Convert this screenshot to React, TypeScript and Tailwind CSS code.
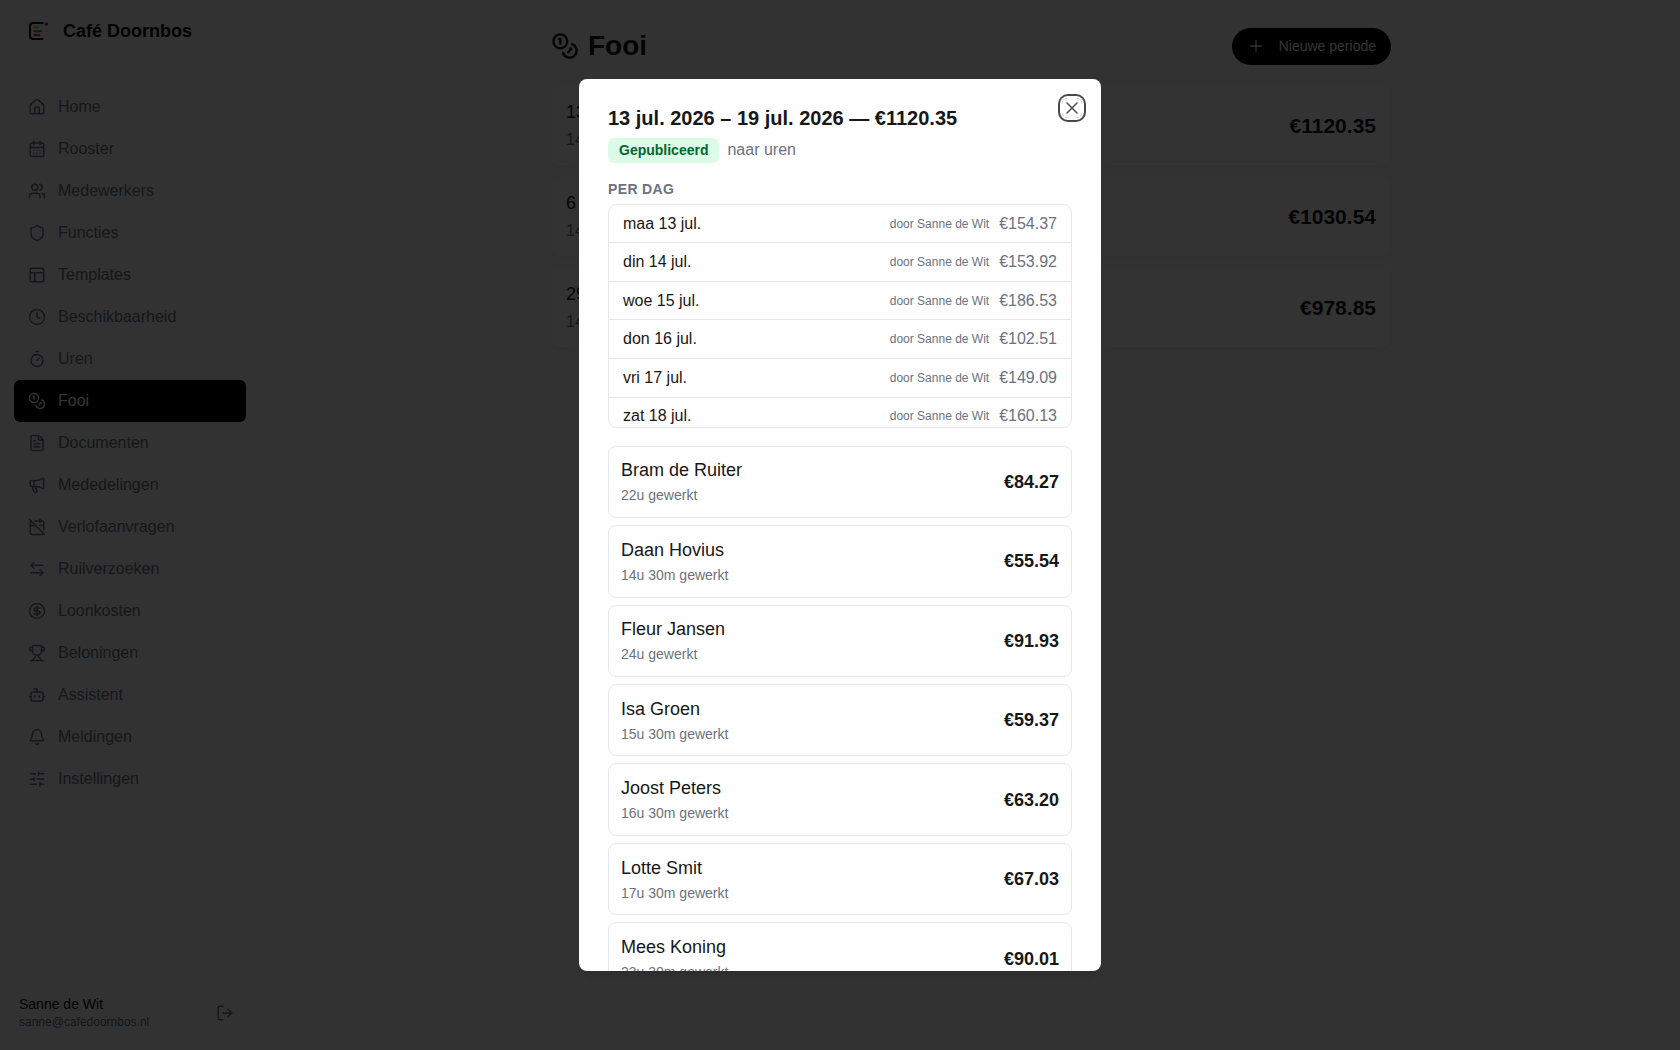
import React from "react";
import {
  House, CalendarDays, Users, Shield, PanelsTopLeft, Clock, Timer, Coins, FileText, Megaphone,
  CalendarOff, ArrowLeftRight, CircleDollarSign, Trophy, Bot, Bell, SlidersHorizontal, LogOut, Plus, X,
} from "lucide-react";

const nav = [
  { label: "Home", icon: House },
  { label: "Rooster", icon: CalendarDays },
  { label: "Medewerkers", icon: Users },
  { label: "Functies", icon: Shield },
  { label: "Templates", icon: PanelsTopLeft },
  { label: "Beschikbaarheid", icon: Clock },
  { label: "Uren", icon: Timer },
  { label: "Fooi", icon: Coins, active: true },
  { label: "Documenten", icon: FileText },
  { label: "Mededelingen", icon: Megaphone },
  { label: "Verlofaanvragen", icon: CalendarOff },
  { label: "Ruilverzoeken", icon: ArrowLeftRight },
  { label: "Loonkosten", icon: CircleDollarSign },
  { label: "Beloningen", icon: Trophy },
  { label: "Assistent", icon: Bot },
  { label: "Meldingen", icon: Bell },
  { label: "Instellingen", icon: SlidersHorizontal },
];

const periods = [
  { range: "13 jul. 2026 – 19 jul. 2026", staff: "14 medewerkers", total: "€1120.35" },
  { range: "6 jul. 2026 – 12 jul. 2026", staff: "14 medewerkers", total: "€1030.54" },
  { range: "29 jun. 2026 – 5 jul. 2026", staff: "14 medewerkers", total: "€978.85" },
];

const days = [
  ["maa 13 jul.", "€154.37"],
  ["din 14 jul.", "€153.92"],
  ["woe 15 jul.", "€186.53"],
  ["don 16 jul.", "€102.51"],
  ["vri 17 jul.", "€149.09"],
  ["zat 18 jul.", "€160.13"],
  ["zon 19 jul.", "€213.80"],
];

const people = [
  ["Bram de Ruiter", "22u gewerkt", "€84.27"],
  ["Daan Hovius", "14u 30m gewerkt", "€55.54"],
  ["Fleur Jansen", "24u gewerkt", "€91.93"],
  ["Isa Groen", "15u 30m gewerkt", "€59.37"],
  ["Joost Peters", "16u 30m gewerkt", "€63.20"],
  ["Lotte Smit", "17u 30m gewerkt", "€67.03"],
  ["Mees Koning", "23u 30m gewerkt", "€90.01"],
];

function Logo() {
  return (
    <svg viewBox="0 0 22 22" className="size-[22px]" fill="none" strokeLinecap="round" aria-hidden="true">
      <path d="M14.500 3H5A3 3 0 0 0 2 6V16A3 3 0 0 0 5 19H14.500" stroke="#0a0a0a" strokeWidth="2" />
      <path d="M6.500 7.500H10" stroke="#eab308" strokeWidth="2" />
      <path d="M6.500 11.200H13" stroke="#16a34a" strokeWidth="2" />
      <path d="M6.500 15H11.500" stroke="#dc2626" strokeWidth="2" />
      <circle cx="18.500" cy="4" r="1.800" fill="#dc2626" />
    </svg>
  );
}

function Sidebar() {
  return (
    <aside className="flex w-[262px] shrink-0 flex-col bg-neutral-50">
      <div className="flex items-center gap-3 px-7 pt-[19px]">
        <Logo />
        <span className="pl-[1px] text-lg leading-6 font-bold text-neutral-950">Café Doornbos</span>
      </div>
      <nav className="mt-[43px] flex flex-1 flex-col px-3.5">
        {nav.map(({ label, icon: Icon, active }) => (
          <a
            key={label}
            href="#"
            aria-current={active ? "page" : undefined}
            className={
              active
                ? "mr-0.5 flex h-[42px] items-center gap-3 rounded-md bg-black px-3.5 text-base text-white"
                : "mr-0.5 flex h-[42px] items-center gap-3 rounded-md px-3.5 text-base text-gray-500"
            }
          >
            <Icon size={18} strokeWidth={2} />
            {label}
          </a>
        ))}
      </nav>
      <div className="flex items-center justify-between pr-[28px] pb-[19px] pl-[19px]">
        <div>
          <p className="text-sm leading-[18px] text-neutral-950">Sanne de Wit</p>
          <p className="text-xs leading-[18px] text-gray-500">sanne@cafedoornbos.nl</p>
        </div>
        <button type="button" aria-label="Uitloggen" className="text-gray-500">
          <LogOut size={18} strokeWidth={2} />
        </button>
      </div>
    </aside>
  );
}

function PeriodsPage() {
  return (
    <main className="flex-1 px-7 pt-7">
      <div className="mx-auto max-w-[840px]">
        <header className="flex h-9 items-center justify-between">
          <h1 className="flex items-center gap-[9px] text-[28px] leading-9 font-bold text-neutral-900">
            <Coins size={28} />
            Fooi
          </h1>
          <button
            type="button"
            className="flex h-[37px] items-center gap-3.5 rounded-full bg-black px-[15px] text-sm text-white"
          >
            <Plus size={18} strokeWidth={1.75} />
            Nieuwe periode
          </button>
        </header>
        <ul className="mt-[21px] flex flex-col gap-2.5">
          {periods.map((p) => (
            <li
              key={p.range}
              className="flex items-center justify-between rounded-lg border border-neutral-50 bg-white p-3.5 shadow-xs"
            >
              <div>
                <p className="text-lg leading-6 text-neutral-900">{p.range}</p>
                <p className="mt-[5px] text-base leading-[22px] text-gray-500">{p.staff}</p>
              </div>
              <span className="text-[21px] leading-7 font-bold text-neutral-900">{p.total}</span>
            </li>
          ))}
        </ul>
      </div>
    </main>
  );
}

function PeriodDialog() {
  return (
    <div className="fixed inset-0 flex items-center justify-center bg-black/80">
      <div
        role="dialog"
        aria-modal="true"
        aria-labelledby="period-title"
        className="relative max-h-[85vh] w-full max-w-[522px] overflow-y-auto rounded-lg bg-white px-[29px] pt-[27px] pb-7 shadow-lg [scrollbar-width:none]"
      >
        <h2 id="period-title" className="text-xl leading-6 font-bold text-neutral-900">
          13 jul. 2026 – 19 jul. 2026 — €1120.35
        </h2>
        <div className="mt-2 flex items-center gap-2 text-base text-gray-500">
          <span className="rounded-md bg-green-100 px-[11px] text-sm leading-[25px] font-bold text-green-800">
            Gepubliceerd
          </span>
          naar uren
        </div>
        <h3 className="mt-4 text-sm leading-5 font-bold tracking-wide text-gray-500">PER DAG</h3>
        <div className="mt-[5px] h-[224px] overflow-y-auto rounded-lg border border-gray-200 [scrollbar-width:none]">
          <ul className="grid h-[270px] auto-rows-fr divide-y divide-gray-200">
            {days.map(([day, amount]) => (
              <li key={day} className="flex items-center justify-between px-3.5 text-base text-neutral-900">
                {day}
                <span className="flex items-center gap-2.5 text-gray-500">
                  <span className="text-xs">door Sanne de Wit</span>
                  {amount}
                </span>
              </li>
            ))}
          </ul>
        </div>
        <ul className="mt-[18px] grid h-[549px] auto-rows-fr gap-[7px]">
          {people.map(([name, hours, amount]) => (
            <li key={name} className="flex items-center justify-between rounded-lg border border-gray-200 px-3">
              <div>
                <p className="text-lg leading-6 text-neutral-900">{name}</p>
                <p className="mt-[3px] text-sm leading-5 text-gray-500">{hours}</p>
              </div>
              <span className="text-lg leading-6 font-bold text-neutral-900">{amount}</span>
            </li>
          ))}
        </ul>
        <button
          type="button"
          aria-label="Sluiten"
          className="absolute top-[19px] right-[19px] rounded-md text-neutral-900 opacity-75 ring-2 ring-neutral-950 ring-offset-2"
        >
          <X size={20} strokeWidth={1.75} />
        </button>
      </div>
    </div>
  );
}

export default function App() {
  return (
    <div className="flex h-screen overflow-hidden bg-neutral-50 font-['Liberation_Sans',Arial,sans-serif]">
      <Sidebar />
      <PeriodsPage />
      <PeriodDialog />
    </div>
  );
}
